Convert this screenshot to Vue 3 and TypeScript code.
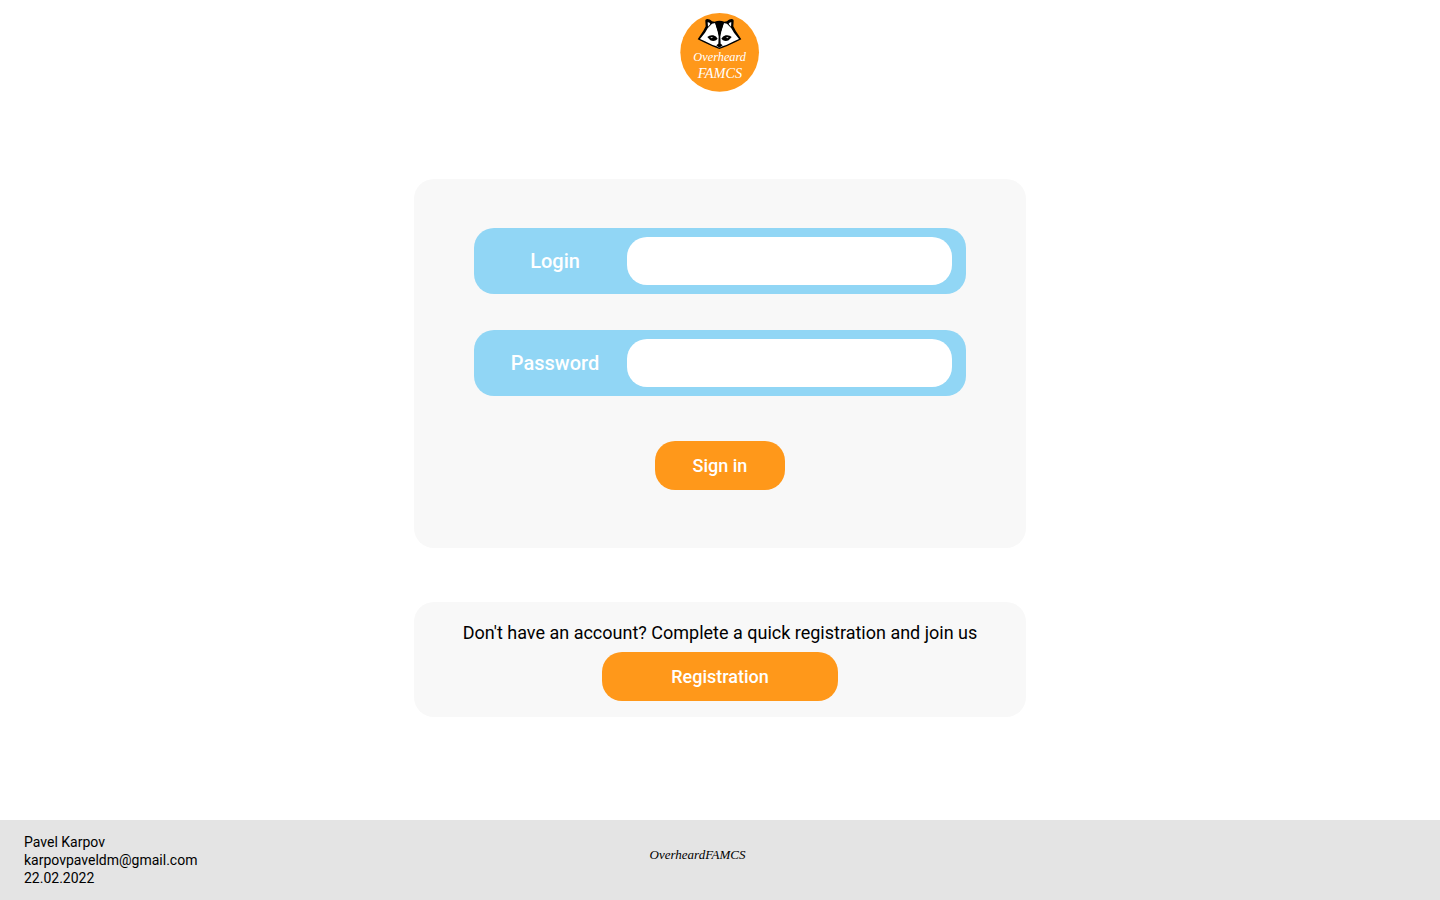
<script setup lang="ts">
import { reactive } from 'vue'

interface Field {
  key: 'login' | 'password'
  label: string
  type: string
}

const fields: Field[] = [
  { key: 'login', label: 'Login', type: 'text' },
  { key: 'password', label: 'Password', type: 'password' },
]

const form = reactive({ login: '', password: '' })
</script>

<template>
  <div class="page">
    <header class="header">
      <svg class="logo" viewBox="30 27 240 240" role="img" aria-label="Overheard FAMCS">
        <circle cx="149" cy="145" r="118" fill="#ff981a" />
        <!-- head silhouette -->
        <path
          d="M106 52C105 43 117 43 126 52L134 53Q148 48 163 53L171 52C180 43 192 43 191 52L190 67L197 80L214 106L196 115L170 127L148 135L127 127L101 115L83 106L100 80L107 67Z"
          fill="#000"
        />
        <!-- ears -->
        <path d="M113 55Q119 54 121 60L114 68Z" fill="#fff" />
        <path d="M184 55Q178 54 176 60L183 68Z" fill="#fff" />
        <!-- face -->
        <path
          d="M126 59L136 57L143 80L148 96L154 80L161 57L171 59L184 73L192 86L207 105L192 112L169 123L157 127L148 131L140 127L128 123L105 112L90 105L105 86L113 73Z"
          fill="#fff"
        />
        <!-- brow stripe running down to the nose -->
        <path d="M135 56H162L154 82L151 98L152 119L158 124L148 131L139 124L145 119L146 98L143 82Z" fill="#000" />
        <!-- eye patches -->
        <path d="M112 99Q119 92 130 94Q139 97 143 104L138 109Q130 113 121 109Z" fill="#000" />
        <path d="M185 99Q178 92 167 94Q158 97 154 104L159 109Q167 113 176 109Z" fill="#000" />
        <path d="M121 100L129 100L125 103Z" fill="#fff" />
        <path d="M176 100L168 100L172 103Z" fill="#fff" />
        <text x="149" y="171" font-size="37">Overheard</text>
        <text x="150" y="221" font-size="43">FAMCS</text>
      </svg>
    </header>

    <main class="main">
      <form class="card sign-in" @submit.prevent>
        <div v-for="field in fields" :key="field.key" class="field">
          <label :for="field.key">{{ field.label }}</label>
          <input :id="field.key" v-model="form[field.key]" :type="field.type" />
        </div>
        <button class="button" type="submit">Sign in</button>
      </form>

      <section class="card join">
        <p>Don't have an account? Complete a quick registration and join us</p>
        <button class="button wide" type="button">Registration</button>
      </section>
    </main>

    <footer class="footer">
      <address>
        Pavel Karpov<br />
        karpovpaveldm@gmail.com<br />
        22.02.2022
      </address>
      <span class="brand">OverheardFAMCS</span>
    </footer>
  </div>
</template>

<style>
body {
  margin: 0;
  background: #fff;
}
</style>

<style scoped>
.page {
  display: flex;
  flex-direction: column;
  min-height: 100vh;
  color: #000;
  font-family: Roboto, "Liberation Sans", sans-serif;
}

.header {
  display: flex;
  justify-content: center;
  padding-top: 13px;
}

.logo {
  width: 80px;
  height: 80px;
}

.logo text {
  fill: #fff;
  font-family: "Liberation Serif", serif;
  font-style: italic;
  text-anchor: middle;
}

.main {
  flex: 1;
  display: flex;
  flex-direction: column;
  align-items: center;
  gap: 54px;
  padding: 86px 16px 48px;
}

.card {
  box-sizing: border-box;
  display: flex;
  flex-direction: column;
  align-items: center;
  width: 100%;
  max-width: 612px;
  border-radius: 20px;
  background: #f8f8f8;
}

.sign-in {
  gap: 36px;
  padding: 49px 60px 58px;
}

.field {
  box-sizing: border-box;
  display: flex;
  align-items: center;
  width: 100%;
  padding: 9px 14px 9px 9px;
  border-radius: 20px;
  background: #91d6f5;
}

.field label {
  flex: 0 0 144px;
  color: #fff;
  font-size: 20px;
  font-weight: 500;
  text-align: center;
}

.field input {
  box-sizing: border-box;
  flex: 1;
  min-width: 0;
  height: 48px;
  padding: 0 16px;
  border: 0;
  border-radius: 20px;
  background: #fff;
  font: inherit;
  font-size: 18px;
}

.button {
  width: 130px;
  height: 49px;
  padding: 0;
  border: 0;
  border-radius: 20px;
  background: #ff981a;
  color: #fff;
  font-family: inherit;
  font-size: 18px;
  font-weight: 500;
  cursor: pointer;
}

.sign-in .button {
  margin-top: 9px;
}

.button.wide {
  width: 236px;
}

.join {
  gap: 8px;
  padding: 20px 16px 16px;
}

.join p {
  margin: 0;
  font-size: 18px;
  line-height: 22px;
  text-align: center;
}

.footer {
  box-sizing: border-box;
  display: grid;
  grid-template-columns: 1fr auto 1fr;
  min-height: 80px;
  padding: 13px 69px 13px 24px;
  background: #e4e4e4;
}

.footer address {
  font-size: 14px;
  font-style: normal;
  line-height: 18px;
}

.brand {
  padding-top: 13px;
  font-family: "Liberation Serif", serif;
  font-size: 13px;
  font-style: italic;
  line-height: 18px;
}
</style>
